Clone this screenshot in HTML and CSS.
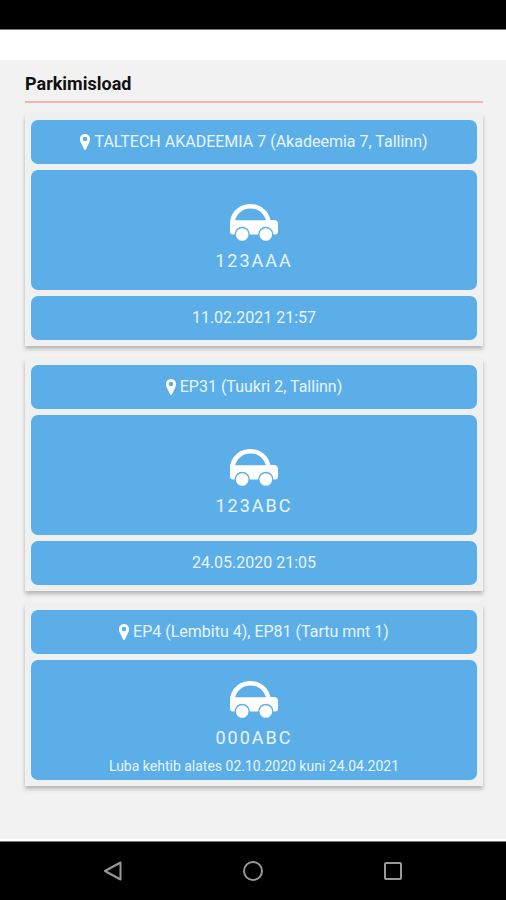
FILE: index.html
```html
<!DOCTYPE html>
<html lang="et">
<head>
<meta charset="utf-8">
<meta name="viewport" content="width=device-width, initial-scale=1">
<title>Parkimisload</title>
<link rel="stylesheet" href="styles.css">
</head>
<body>
<svg class="symbols" aria-hidden="true">
  <symbol id="pin" viewBox="0 0 10 16">
    <path fill-rule="evenodd" d="M5 0C2.200 0 0 2.200 0 5c0 1.500.3 2.500.8 3.500L4 15.200c.4.900 1.600.9 2 0L9.200 8.500C9.700 7.500 10 6.500 10 5c0-2.800-2.200-5-5-5zM5 2.700a2.300 2.300 0 1 1 0 4.600 2.300 2.300 0 0 1 0-4.600z"/>
  </symbol>
  <symbol id="car" viewBox="0 0 48 37">
    <path fill-rule="evenodd" d="M3 30.500C1 30.500 0 29.500 0 27.500V20C0 8.500 9 0 20.500 0 31 0 38.500 7 40.500 16H44c2.500 0 4 1.500 4 4v7.500c0 2-1 3-3 3H43.500a7.700 7.700 0 0 0-15.400 0H19.900a7.700 7.700 0 0 0-15.400 0zM5 16.200H36C33.500 9 28 4.500 20.500 4.500S7.500 9 5 16.200z"/>
    <circle cx="12.200" cy="30.500" r="6.300"/>
    <circle cx="35.800" cy="30.500" r="6.300"/>
  </symbol>
</svg>
<div class="screen">
  <div class="status-bar"></div>
  <header class="top-bar"></header>
  <main class="content">
    <h1 class="title">Parkimisload</h1>
    <div class="permits">
      <article class="permit">
        <div class="tile"><svg class="pin" aria-hidden="true"><use href="#pin"/></svg>TALTECH AKADEEMIA 7 (Akadeemia 7, Tallinn)</div>
        <div class="tile vehicle">
          <svg class="car" aria-hidden="true"><use href="#car"/></svg>
          <span class="plate">123AAA</span>
        </div>
        <div class="tile">11.02.2021 21:57</div>
      </article>
      <article class="permit">
        <div class="tile"><svg class="pin" aria-hidden="true"><use href="#pin"/></svg>EP31 (Tuukri 2, Tallinn)</div>
        <div class="tile vehicle">
          <svg class="car" aria-hidden="true"><use href="#car"/></svg>
          <span class="plate">123ABC</span>
        </div>
        <div class="tile">24.05.2020 21:05</div>
      </article>
      <article class="permit">
        <div class="tile"><svg class="pin" aria-hidden="true"><use href="#pin"/></svg>EP4 (Lembitu 4), EP81 (Tartu mnt 1)</div>
        <div class="tile vehicle">
          <svg class="car" aria-hidden="true"><use href="#car"/></svg>
          <span class="plate">000ABC</span>
          <span class="validity">Luba kehtib alates 02.10.2020 kuni 24.04.2021</span>
        </div>
      </article>
    </div>
  </main>
  <nav class="nav-bar">
    <button type="button" aria-label="Tagasi"><svg viewBox="0 0 20 20"><path d="M17.500 1.500v17L2 10z"/></svg></button>
    <button type="button" aria-label="Avakuva"><svg viewBox="0 0 20 20"><circle cx="10" cy="10" r="9"/></svg></button>
    <button type="button" aria-label="Hiljutised"><svg viewBox="0 0 20 20"><rect x="2" y="2" width="16" height="16" rx="1"/></svg></button>
  </nav>
</div>
</body>
</html>
```
FILE: styles.css
```css
* {
  box-sizing: border-box;
}

body {
  margin: 0;
  background: #f2f2f2;
  font-family: Roboto, "Liberation Sans", sans-serif;
}

.symbols {
  display: none;
}

.screen {
  display: flex;
  flex-direction: column;
  min-height: 100vh;
}

.status-bar {
  height: 30px;
  background: #000;
  border-bottom: 1px solid #777;
}

.top-bar {
  height: 30px;
  background: #fff;
}

.content {
  flex: 1;
  padding: 9px 23px 24px 25px;
  border-bottom: 2px solid #fff;
}

.title {
  margin: 0 0 11px;
  padding-bottom: 2px;
  border-bottom: 2px solid #f1b5b0;
  color: #111;
  font-size: 18px;
  font-weight: 700;
  line-height: 30px;
}

.permits {
  display: grid;
  gap: 13px;
}

.permit {
  display: grid;
  gap: 6px;
  padding: 6px;
  background: #eff1f1;
  box-shadow: 0 3px 4px rgba(0, 0, 0, 0.26);
}

.tile {
  display: flex;
  align-items: center;
  justify-content: center;
  min-height: 44px;
  border-radius: 7px;
  background: #5caee9;
  color: #e6f6ff;
  font-size: 16px;
  line-height: 20px;
  text-align: center;
}

.vehicle {
  flex-direction: column;
  min-height: 120px;
  padding-top: 16px;
}

.pin {
  flex: none;
  width: 10px;
  height: 16px;
  margin-right: 4px;
  fill: #fff;
}

.car {
  width: 48px;
  height: 37px;
  fill: #fff;
}

.plate {
  margin-top: 8px;
  font-size: 18px;
  letter-spacing: 2px;
  line-height: 24px;
}

.validity {
  margin-top: 6px;
  font-size: 14px;
  line-height: 20px;
}

.nav-bar {
  display: grid;
  grid-template-columns: repeat(3, 1fr);
  height: 59px;
  padding: 0 43px;
  border-top: 1px solid #777;
  background: #000;
}

.nav-bar button {
  display: grid;
  place-items: center;
  padding: 0;
  border: 0;
  background: none;
}

.nav-bar svg {
  width: 20px;
  height: 20px;
  fill: none;
  stroke: #999;
  stroke-width: 2px;
  stroke-linejoin: round;
}
```
